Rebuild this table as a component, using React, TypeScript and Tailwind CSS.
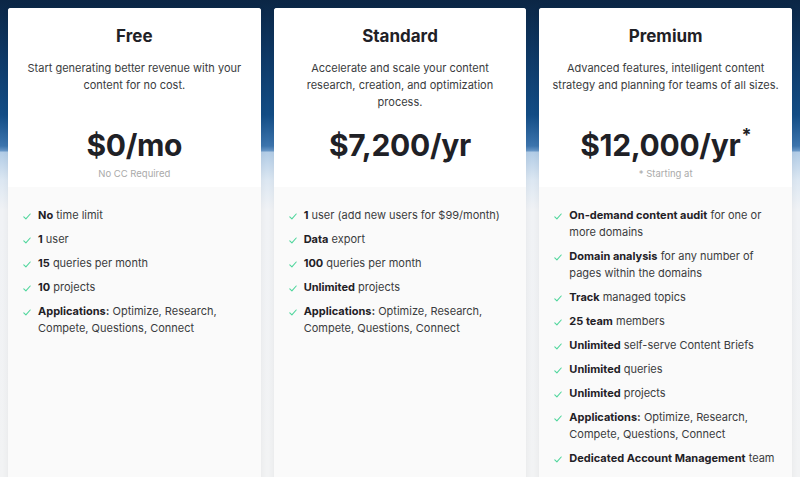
import React from "react";

type Feature = { b?: string; t?: string };

const Check = () => (
  <svg width="8" height="7" viewBox="0 0 8 7" className="mt-[6px] shrink-0" fill="none">
    <path d="M0.8 3.8 L2.9 5.8 L7.2 1" stroke="#4fd69c" strokeWidth="1.1" strokeLinecap="round" strokeLinejoin="round" />
  </svg>
);

function FeatureItem({ f }: { f: Feature }) {
  return (
    <li className="flex gap-[7px]">
      <Check />
      <span>
        {f.b && <b className="font-bold text-[#1f2126]">{f.b}</b>}
        {f.t}
      </span>
    </li>
  );
}

type Plan = {
  name: string;
  desc: string;
  descWidth: string;
  price: string;
  star?: boolean;
  note: string;
  features: Feature[];
};

const plans: Plan[] = [
  {
    name: "Free",
    desc: "Start generating better revenue with your content for no cost.",
    descWidth: "max-w-[232px]",
    price: "$0/mo",
    note: "No CC Required",
    features: [
      { b: "No", t: " time limit" },
      { b: "1", t: " user" },
      { b: "15", t: " queries per month" },
      { b: "10", t: " projects" },
      { b: "Applications:", t: " Optimize, Research, Compete, Questions, Connect" },
    ],
  },
  {
    name: "Standard",
    desc: "Accelerate and scale your content research, creation, and optimization process.",
    descWidth: "max-w-[212px]",
    price: "$7,200/yr",
    note: "",
    features: [
      { b: "1", t: " user (add new users for $99/month)" },
      { b: "Data", t: " export" },
      { b: "100", t: " queries per month" },
      { b: "Unlimited", t: " projects" },
      { b: "Applications:", t: " Optimize, Research, Compete, Questions, Connect" },
    ],
  },
  {
    name: "Premium",
    desc: "Advanced features, intelligent content strategy and planning for teams of all sizes.",
    descWidth: "max-w-[236px]",
    price: "$12,000/yr",
    star: true,
    note: "* Starting at",
    features: [
      { b: "On-demand content audit", t: " for one or more domains" },
      { b: "Domain analysis", t: " for any number of pages within the domains" },
      { b: "Track", t: " managed topics" },
      { b: "25 team", t: " members" },
      { b: "Unlimited", t: " self-serve Content Briefs" },
      { b: "Unlimited", t: " queries" },
      { b: "Unlimited", t: " projects" },
      { b: "Applications:", t: " Optimize, Research, Compete, Questions, Connect" },
      { b: "Dedicated Account Management", t: " team" },
    ],
  },
];

function Card({ p }: { p: Plan }) {
  return (
    <div className="flex flex-col rounded-t-[3px] bg-[#fafafa] shadow-[0_0_6px_rgba(0,0,0,0.06)] overflow-hidden">
      <div className="bg-white px-[8px] pt-[16px] h-[179px] flex flex-col items-center text-center">
        <h2 className="text-[17px] leading-[24px] font-bold text-[#1f2126]">{p.name}</h2>
        <p className={`mt-[12px] h-[51px] text-[11px] leading-[17px] text-[#3a3c40] ${p.descWidth}`}>{p.desc}</p>
        <div className="mt-[16px] h-[36px] flex items-start justify-center text-[30px] leading-[36px] font-bold text-[#1f2126] tracking-[-0.3px]">
          {p.price}
          {p.star && <span className="text-[18px] leading-[18px] ml-[1px] mt-[-1px]">*</span>}
        </div>
        <div className="mt-[4px] h-[14px] text-[9.5px] leading-[14px] text-[#aaaaaa]">{p.note}</div>
      </div>
      <ul className="flex flex-col gap-[7px] pl-[15px] pr-[14px] pt-[20px] text-[11px] leading-[17px] text-[#3a3c40]">
        {p.features.map((f, i) => (
          <FeatureItem key={i} f={f} />
        ))}
      </ul>
    </div>
  );
}

export default function App() {
  return (
    <div
      className="h-[477px] w-[800px] overflow-hidden bg-[linear-gradient(180deg,#0b2645_0px,#0f3a68_60px,#134d86_115px,#3d75ae_146px,#6b99c8_151px,#b2cce6_152px,#dce7f2_180px,#f0f2f5_210px,#f2f3f4_477px)]"
      style={{ fontFamily: "Inter, 'Noto Sans', sans-serif" }}
    >
      <div className="grid h-[calc(100%+200px)] grid-cols-3 gap-[13px] px-[8px] pt-[8px]">
        {plans.map((p) => (
          <Card key={p.name} p={p} />
        ))}
      </div>
    </div>
  );
}
